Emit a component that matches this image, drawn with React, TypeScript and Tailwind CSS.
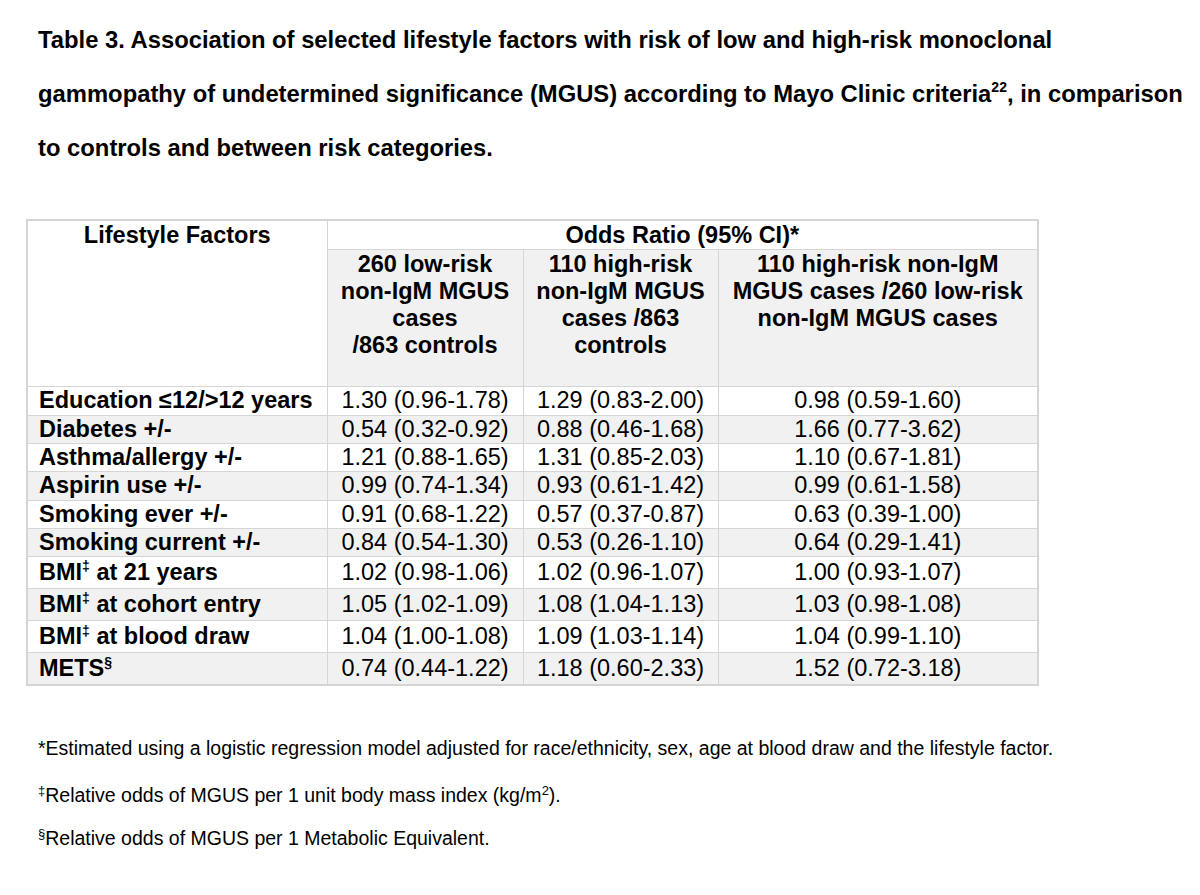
const rows: { label: string; sup?: string; rest?: string; a: string; b: string; c: string; pad?: string }[] = [
  { label: "Education ≤12/>12 years", a: "1.30 (0.96-1.78)", b: "1.29 (0.83-2.00)", c: "0.98 (0.59-1.60)" },
  { label: "Diabetes +/-", a: "0.54 (0.32-0.92)", b: "0.88 (0.46-1.68)", c: "1.66 (0.77-3.62)" },
  { label: "Asthma/allergy +/-", a: "1.21 (0.88-1.65)", b: "1.31 (0.85-2.03)", c: "1.10 (0.67-1.81)" },
  { label: "Aspirin use +/-", a: "0.99 (0.74-1.34)", b: "0.93 (0.61-1.42)", c: "0.99 (0.61-1.58)" },
  { label: "Smoking ever +/-", a: "0.91 (0.68-1.22)", b: "0.57 (0.37-0.87)", c: "0.63 (0.39-1.00)" },
  { label: "Smoking current +/-", a: "0.84 (0.54-1.30)", b: "0.53 (0.26-1.10)", c: "0.64 (0.29-1.41)" },
  { label: "BMI", sup: "‡", rest: " at 21 years", a: "1.02 (0.98-1.06)", b: "1.02 (0.96-1.07)", c: "1.00 (0.93-1.07)", pad: "py-[1.5px]" },
  { label: "BMI", sup: "‡", rest: " at cohort entry", a: "1.05 (1.02-1.09)", b: "1.08 (1.04-1.13)", c: "1.03 (0.98-1.08)", pad: "py-[2px]" },
  { label: "BMI", sup: "‡", rest: " at blood draw", a: "1.04 (1.00-1.08)", b: "1.09 (1.03-1.14)", c: "1.04 (0.99-1.10)", pad: "py-[2px]" },
  { label: "METS", sup: "§", a: "0.74 (0.44-1.22)", b: "1.18 (0.60-2.33)", c: "1.52 (0.72-3.18)", pad: "py-[1.5px]" },
];

const cell = "border border-[#d5d5d5]";

export default function App() {
  return (
    <div className="min-h-[895px] bg-white text-black font-['Liberation_Sans',Arial,sans-serif]">
      <div className="pt-[13px] pl-[38px] text-[23.8px] leading-[54px] font-bold whitespace-nowrap">
        Table 3. Association of selected lifestyle factors with risk of low and high-risk monoclonal
        <br />
        gammopathy of undetermined significance (MGUS) according to Mayo Clinic criteria
        <sup className="text-[14px] -top-[0.75em]">22</sup>, in comparison
        <br />
        to controls and between risk categories.
      </div>

      <div className="pl-[26px] mt-[44px]">
        <table className="border-collapse border-2 border-[#d5d5d5] text-[23.5px] leading-[27.33px]">
          <colgroup>
            <col className="w-[300px]" />
            <col className="w-[196px]" />
            <col className="w-[195px]" />
            <col className="w-[320px]" />
          </colgroup>
          <thead>
            <tr>
              <th rowSpan={2} className={`${cell} align-top text-center font-bold pt-[1px]`}>
                Lifestyle Factors
              </th>
              <th colSpan={3} className={`${cell} text-center font-bold pt-[1px]`}>
                Odds Ratio (95% CI)*
              </th>
            </tr>
            <tr className="bg-[#f1f1f1]">
              <th className={`${cell} align-top text-center font-bold leading-[27px] pt-[1px] pb-[27px]`}>
                260 low-risk
                <br />
                non-IgM MGUS
                <br />
                cases
                <br />
                /863 controls
              </th>
              <th className={`${cell} align-top text-center font-bold leading-[27px] pt-[1px] pb-[27px]`}>
                110 high-risk
                <br />
                non-IgM MGUS
                <br />
                cases /863
                <br />
                controls
              </th>
              <th className={`${cell} align-top text-center font-bold leading-[27px] pt-[1px] pb-[27px]`}>
                110 high-risk non-IgM
                <br />
                MGUS cases /260 low-risk
                <br />
                non-IgM MGUS cases
              </th>
            </tr>
          </thead>
          <tbody>
            {rows.map((r, i) => (
              <tr key={i} className={i % 2 === 1 ? "bg-[#f1f1f1]" : "bg-white"}>
                <td className={`${cell} ${r.pad ?? "py-0"} pl-[11px] font-bold whitespace-nowrap`}>
                  {r.label}
                  {r.sup && <sup className="text-[14px] -top-[0.6em]">{r.sup}</sup>}
                  {r.rest}
                </td>
                <td className={`${cell} ${r.pad ?? "py-0"} text-center whitespace-nowrap`}>{r.a}</td>
                <td className={`${cell} ${r.pad ?? "py-0"} text-center whitespace-nowrap`}>{r.b}</td>
                <td className={`${cell} ${r.pad ?? "py-0"} text-center whitespace-nowrap`}>{r.c}</td>
              </tr>
            ))}
          </tbody>
        </table>
      </div>

      <div className="pl-[38px] mt-[40px] text-[19.5px] leading-[45px] whitespace-nowrap">
        <p>
          *Estimated using a logistic regression model adjusted for race/ethnicity, sex, age at blood draw and the
          lifestyle factor.
        </p>
        <p className="mt-[2px]">
          <sup className="text-[13px]">‡</sup>Relative odds of MGUS per 1 unit body mass index (kg/m
          <sup className="text-[13px]">2</sup>).
        </p>
        <p className="-mt-[2px]">
          <sup className="text-[13px]">§</sup>Relative odds of MGUS per 1 Metabolic Equivalent.
        </p>
      </div>
    </div>
  );
}
